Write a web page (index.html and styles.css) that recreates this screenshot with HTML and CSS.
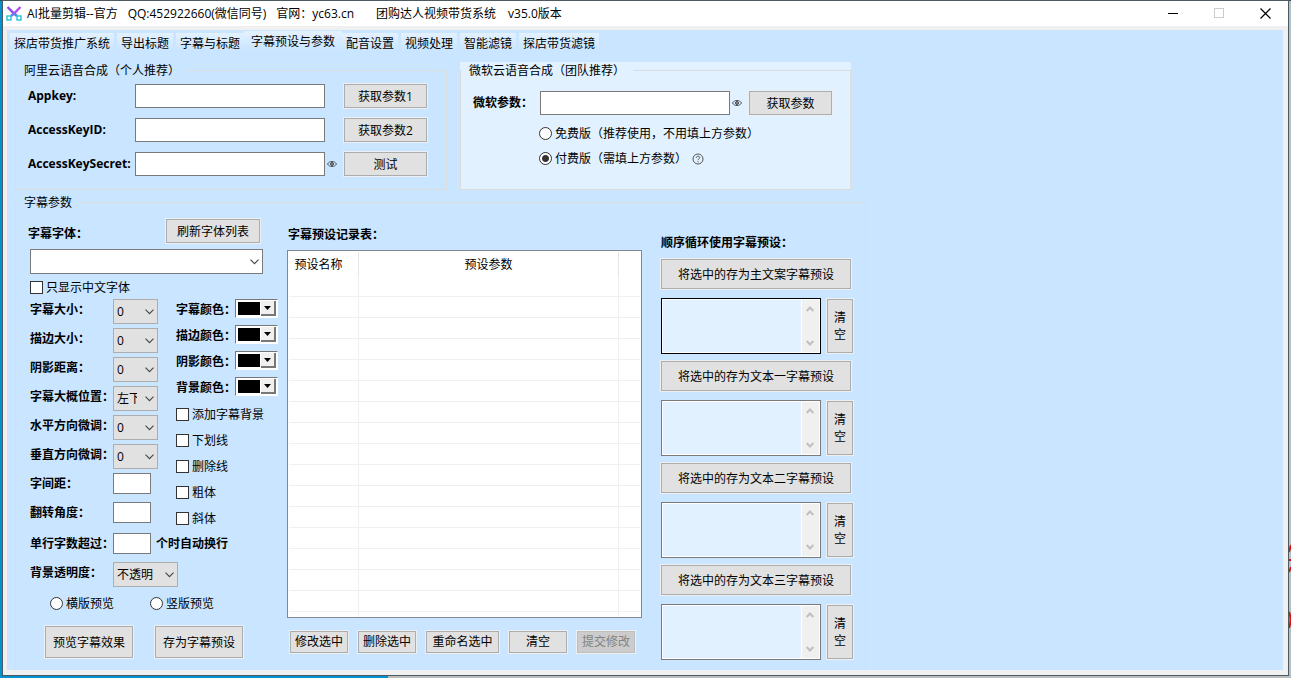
FILE: index.html
```html
<!DOCTYPE html>
<html lang="zh-CN">
<head>
<meta charset="utf-8">
<title>AI批量剪辑</title>
<link rel="stylesheet" href="styles.css">
</head>
<body>
<svg width="0" height="0" class="defs" aria-hidden="true">
  <symbol id="chev" viewBox="0 0 9 6"><path d="M.5 .7 4.5 4.7 8.5 .7" fill="none" stroke="#444" stroke-width="1.1"/></symbol>
  <symbol id="up" viewBox="0 0 8 6"><path d="M.7 5 4 1.5 7.3 5" fill="none" stroke="#bfbfbf" stroke-width="2"/></symbol>
  <symbol id="down" viewBox="0 0 8 6"><path d="M.7 1 4 4.5 7.3 1" fill="none" stroke="#bfbfbf" stroke-width="2"/></symbol>
  <symbol id="eye" viewBox="0 0 10 8"><path d="M.5 4C2.3 .6 7.7 .6 9.5 4 7.7 7.4 2.3 7.4 .5 4Z" fill="none" stroke="#555b62"/><circle cx="5" cy="4" r="1.5" fill="#8a9299" stroke="#444"/></symbol>
  <symbol id="tri" viewBox="0 0 7 4"><path d="M0 0H7L3.5 4Z"/></symbol>
</svg>

<main class="window">
  <header class="titlebar">
    <svg class="logo" viewBox="0 0 16 15" aria-hidden="true">
      <path d="M1.5 1 8 7.5 11 10" stroke="#8f4bea" stroke-width="2.4" fill="none"/>
      <path d="M14.5 1 8 7.5 5 10" stroke="#b04df0" stroke-width="2.4" fill="none"/>
      <path d="M5 10 8 7.5 11 10" stroke="#4a8fe0" stroke-width="1.6" fill="none"/>
      <rect x="1" y="10" width="4" height="4" stroke="#20c5dc" stroke-width="1.4" fill="none"/>
      <rect x="11" y="10" width="4" height="4" stroke="#20c5dc" stroke-width="1.4" fill="none"/>
    </svg>
    <h1 class="title"><span>AI批量剪辑--官方</span><span>QQ:452922660(微信同号)</span><span>官网：yc63.cn</span><span class="far">团购达人视频带货系统</span><span class="mid">v35.0版本</span></h1>
    <div class="winbtns">
      <button type="button" aria-label="最小化"><svg width="11" height="11"><path d="M0 5.5H10" stroke="#000"/></svg></button>
      <button type="button" aria-label="最大化" disabled><svg width="11" height="11"><rect x=".5" y=".5" width="9" height="9" fill="none" stroke="#ccc"/></svg></button>
      <button type="button" aria-label="关闭"><svg width="11" height="11"><path d="M.5 .5 10.5 10.5M10.5 .5 .5 10.5" stroke="#000" stroke-width="1.2"/></svg></button>
    </div>
  </header>

  <div class="client">
    <nav class="tabs">
      <button type="button" class="tab">探店带货推广系统</button>
      <button type="button" class="tab">导出标题</button>
      <button type="button" class="tab">字幕与标题</button>
      <button type="button" class="tab active">字幕预设与参数</button>
      <button type="button" class="tab">配音设置</button>
      <button type="button" class="tab">视频处理</button>
      <button type="button" class="tab">智能滤镜</button>
      <button type="button" class="tab">探店带货滤镜</button>
    </nav>

    <div class="groups">
      <fieldset class="group ali">
        <legend>阿里云语音合成（个人推荐）</legend>
        <div class="keys">
          <label class="b" for="k1">Appkey:</label><input class="box" id="k1" type="text"><span></span><button class="btn" type="button">获取参数1</button>
          <label class="b" for="k2">AccessKeyID:</label><input class="box" id="k2" type="text"><span></span><button class="btn" type="button">获取参数2</button>
          <label class="b" for="k3">AccessKeySecret:</label><input class="box" id="k3" type="text"><svg class="eye"><use href="#eye"/></svg><button class="btn" type="button">测试</button>
        </div>
      </fieldset>
      <div class="ms">
        <fieldset class="group">
          <legend>微软云语音合成（团队推荐）</legend>
          <div class="msrow">
            <label class="b" for="m1">微软参数：</label><input class="box" id="m1" type="text"><svg class="eye"><use href="#eye"/></svg><button class="btn" type="button">获取参数</button>
          </div>
          <div class="plans">
            <label class="opt"><input type="radio" name="plan">免费版（推荐使用，不用填上方参数）</label>
            <div class="paid">
              <label class="opt"><input type="radio" name="plan" checked>付费版（需填上方参数）</label>
              <svg width="12" height="12" viewBox="0 0 12 12" aria-hidden="true"><circle cx="6" cy="6" r="5" fill="none" stroke="#555"/><path d="M4.3 4.8C4.3 2.7 7.7 2.8 7.7 4.7 7.7 5.8 6 5.9 6 7.2M6 8.2V9.3" fill="none" stroke="#555"/></svg>
            </div>
          </div>
        </fieldset>
      </div>
    </div>

    <fieldset class="group params">
      <legend>字幕参数</legend>
      <div class="cols">
        <section class="style">
          <div class="fonthead"><label class="b" for="font">字幕字体：</label><button class="btn" type="button">刷新字体列表</button></div>
          <div class="sel white"><select id="font"><option></option></select><svg><use href="#chev"/></svg></div>
          <label class="opt only"><input type="checkbox">只显示中文字体</label>
          <div class="pair">
            <div class="left">
              <div class="row"><label class="b" for="s1">字幕大小：</label><div class="sel"><select id="s1"><option>0</option></select><svg><use href="#chev"/></svg></div></div>
              <div class="row"><label class="b" for="s2">描边大小：</label><div class="sel"><select id="s2"><option>0</option></select><svg><use href="#chev"/></svg></div></div>
              <div class="row"><label class="b" for="s3">阴影距离：</label><div class="sel"><select id="s3"><option>0</option></select><svg><use href="#chev"/></svg></div></div>
              <div class="row"><label class="b" for="s4">字幕大概位置：</label><div class="sel"><select id="s4"><option>左下</option></select><svg><use href="#chev"/></svg></div></div>
              <div class="row"><label class="b" for="s5">水平方向微调：</label><div class="sel"><select id="s5"><option>0</option></select><svg><use href="#chev"/></svg></div></div>
              <div class="row"><label class="b" for="s6">垂直方向微调：</label><div class="sel"><select id="s6"><option>0</option></select><svg><use href="#chev"/></svg></div></div>
              <div class="row"><label class="b" for="s7">字间距：</label><input class="box num" id="s7" type="text"></div>
              <div class="row"><label class="b" for="s8">翻转角度：</label><input class="box num" id="s8" type="text"></div>
            </div>
            <div class="right">
              <div class="crow"><span class="b">字幕颜色：</span><button type="button" class="color" aria-label="字幕颜色"><i></i><em><svg><use href="#tri"/></svg></em></button></div>
              <div class="crow"><span class="b">描边颜色：</span><button type="button" class="color" aria-label="描边颜色"><i></i><em><svg><use href="#tri"/></svg></em></button></div>
              <div class="crow"><span class="b">阴影颜色：</span><button type="button" class="color" aria-label="阴影颜色"><i></i><em><svg><use href="#tri"/></svg></em></button></div>
              <div class="crow"><span class="b">背景颜色：</span><button type="button" class="color" aria-label="背景颜色"><i></i><em><svg><use href="#tri"/></svg></em></button></div>
              <div class="checks">
                <label class="opt"><input type="checkbox">添加字幕背景</label>
                <label class="opt"><input type="checkbox">下划线</label>
                <label class="opt"><input type="checkbox">删除线</label>
                <label class="opt"><input type="checkbox">粗体</label>
                <label class="opt"><input type="checkbox">斜体</label>
              </div>
            </div>
          </div>
          <div class="row wrapat"><label class="b" for="s9">单行字数超过：</label><input class="box num" id="s9" type="text"><span class="b after">个时自动换行</span></div>
          <div class="row"><label class="b" for="s10">背景透明度：</label><div class="sel wide"><select id="s10"><option>不透明</option></select><svg><use href="#chev"/></svg></div></div>
          <div class="orient">
            <label class="opt"><input type="radio" name="orient">横版预览</label>
            <label class="opt"><input type="radio" name="orient">竖版预览</label>
          </div>
          <div class="big"><button class="btn" type="button">预览字幕效果</button><button class="btn" type="button">存为字幕预设</button></div>
        </section>

        <section class="records">
          <h2 class="b">字幕预设记录表：</h2>
          <div class="list">
            <table>
              <thead><tr><th class="c1">预设名称</th><th>预设参数</th><th class="c3"></th></tr></thead>
              <tbody>
                <tr><td></td><td></td><td></td></tr><tr><td></td><td></td><td></td></tr>
                <tr><td></td><td></td><td></td></tr><tr><td></td><td></td><td></td></tr>
                <tr><td></td><td></td><td></td></tr><tr><td></td><td></td><td></td></tr>
                <tr><td></td><td></td><td></td></tr><tr><td></td><td></td><td></td></tr>
                <tr><td></td><td></td><td></td></tr><tr><td></td><td></td><td></td></tr>
                <tr><td></td><td></td><td></td></tr><tr><td></td><td></td><td></td></tr>
                <tr><td></td><td></td><td></td></tr><tr><td></td><td></td><td></td></tr>
                <tr><td></td><td></td><td></td></tr><tr><td></td><td></td><td></td></tr>
                <tr><td></td><td></td><td></td></tr>
              </tbody>
            </table>
          </div>
          <div class="acts">
            <button class="btn" type="button">修改选中</button>
            <button class="btn" type="button">删除选中</button>
            <button class="btn long" type="button">重命名选中</button>
            <button class="btn" type="button">清空</button>
            <button class="btn" type="button" disabled>提交修改</button>
          </div>
        </section>

        <section class="cycle">
          <h2 class="b">顺序循环使用字幕预设：</h2>
          <div class="slot">
            <button class="btn save" type="button">将选中的存为主文案字幕预设</button>
            <div class="line"><div class="area hot"><textarea aria-label="主文案字幕预设"></textarea><div class="bar"><svg><use href="#up"/></svg><svg><use href="#down"/></svg></div></div><button class="btn clear" type="button">清<br>空</button></div>
          </div>
          <div class="slot">
            <button class="btn save" type="button">将选中的存为文本一字幕预设</button>
            <div class="line"><div class="area"><textarea aria-label="文本一字幕预设"></textarea><div class="bar"><svg><use href="#up"/></svg><svg><use href="#down"/></svg></div></div><button class="btn clear" type="button">清<br>空</button></div>
          </div>
          <div class="slot">
            <button class="btn save" type="button">将选中的存为文本二字幕预设</button>
            <div class="line"><div class="area"><textarea aria-label="文本二字幕预设"></textarea><div class="bar"><svg><use href="#up"/></svg><svg><use href="#down"/></svg></div></div><button class="btn clear" type="button">清<br>空</button></div>
          </div>
          <div class="slot">
            <button class="btn save" type="button">将选中的存为文本三字幕预设</button>
            <div class="line"><div class="area"><textarea aria-label="文本三字幕预设"></textarea><div class="bar"><svg><use href="#up"/></svg><svg><use href="#down"/></svg></div></div><button class="btn clear" type="button">清<br>空</button></div>
          </div>
        </section>
      </div>
    </fieldset>
  </div>
</main>
<svg class="peek" width="2" height="140" aria-hidden="true"><path d="M0 12 2 5M0 20H2M0 32 2 27" stroke="#e01010" stroke-width="2"/><path d="M0 72Q3 79 0 88" stroke="#e01010" stroke-width="2" fill="none"/></svg>
</body>
</html>
```
FILE: styles.css
```css
* { box-sizing: border-box; }

body {
  margin: 0;
  height: 100vh;
  padding: 1px 3px 3px;
  display: flex;
  overflow: hidden;
  position: relative;
  font: 12px/17px "Open Sans", "Noto Sans CJK SC", sans-serif;
  color: #000;
  background:
    linear-gradient(#3c4650, #3c4650) top / 100% 1px no-repeat,
    linear-gradient(#b4c0c6, #b4c0c6) right / 3px 100% no-repeat,
    linear-gradient(90deg, #0590cf 388px, #bcbcbc 388px);
}

.defs { position: absolute; }
.peek { position: absolute; right: 0; top: 540px; }

button, input, select, textarea { font: inherit; color: inherit; margin: 0; }
h1, h2 { margin: 0; font-size: 12px; font-weight: 400; }
.b { font-weight: 700; white-space: nowrap; }

.window {
  flex: 1;
  display: flex;
  flex-direction: column;
  background: #f0f0f0;
  padding: 0 5px 5px 4px;
  box-shadow: 0 0 0 1px #4c5a62;
}

.titlebar {
  display: flex;
  align-items: center;
  height: 25px;
  margin: 0 -5px 4px -4px;
  padding-left: 3px;
  background: #fff;
}
.logo { width: 16px; height: 15px; margin-right: 5px; }
.title { display: flex; gap: 10px; flex: 1; white-space: nowrap; }
.title .far { margin-left: 12px; }
.title .mid { margin-left: 2px; }
.winbtns { display: flex; }
.winbtns button {
  width: 46px;
  height: 25px;
  padding: 0;
  border: 0;
  background: none;
  display: grid;
  place-items: center;
}

.client { flex: 1; min-height: 0; background: #c9e5ff; overflow: hidden; padding-left: 3px; }

.tabs { display: flex; gap: 3px; align-items: flex-start; height: 32px; padding-top: 3px; }
.tab {
  border: 0;
  padding: 2px 4px 0;
  height: 18px;
  line-height: 17px;
  white-space: nowrap;
  background: linear-gradient(#e4f1ff, #c9e5ff);
}
.tab.active { padding: 2px 7px 0; margin: -2px -3px 0; height: 20px; line-height: 18px; }

.groups { display: flex; align-items: stretch; gap: 13px; padding-left: 5px; }
.group { margin: 0; min-width: 0; border: 1px solid #dcdcdc; padding: 0; }
legend { padding: 0 8px; margin: 0; line-height: 17px; white-space: nowrap; }

.box { border: 1px solid #7a7a7a; background: #fff; height: 24px; width: 190px; padding: 0 4px; }
.btn {
  height: 24px;
  padding: 0 4px;
  border: 1px solid #adadad;
  border-radius: 0;
  background: #e1e1e1;
  box-shadow: 0 0 0 1px #edf0f2;
  line-height: 17px;
  white-space: nowrap;
}
.btn:disabled { background: #ccc; color: #838383; border-color: #bfbfbf; }
.eye { width: 10px; height: 8px; }

.ali { width: 432px; padding-bottom: 12px; }
.keys { display: grid; grid-template-columns: 107px 190px 19px 83px; row-gap: 8px; align-items: center; padding: 4px 0 0 12px; }
.keys .b { padding-bottom: 2px; }
.keys .eye { margin-left: 2px; }
.keys > * { margin-top: 1px; margin-bottom: 1px; }

.ms { width: 391px; background: #e1f1ff; }
.ms .group { height: 100%; }
.msrow { display: grid; grid-template-columns: 67px 190px 19px 83px; align-items: center; padding: 12px 0 0 12px; }
.msrow .b { padding-bottom: 2px; }
.msrow .eye { margin-left: 2px; }
.plans { display: flex; flex-direction: column; gap: 8px; padding: 10px 0 0 78px; }
.paid { display: flex; align-items: center; gap: 5px; }

.opt { display: flex; align-items: center; gap: 3px; white-space: nowrap; }
.opt input {
  appearance: none;
  flex: none;
  width: 13px;
  height: 13px;
  border: 1px solid #333;
  background: #fff;
}
.opt input[type="radio"] { border-radius: 50%; }
.opt input[type="radio"]:checked { background: radial-gradient(circle, #333 3px, #fff 4px); }

.params { width: 851px; margin: 4px 0 0 5px; border-bottom: 0; height: 100%; }
.cols { display: grid; grid-template-columns: 259px 374px 1fr; padding-left: 12px; }

.fonthead { display: flex; justify-content: space-between; width: 232px; padding-top: 8px; }
.fonthead .b { padding-top: 6px; }
.fonthead .btn { width: 94px; }

.sel { position: relative; width: 45px; height: 25px; flex: none; }
.sel select {
  appearance: none;
  width: 100%;
  height: 100%;
  padding: 0 20px 0 3px;
  border: 1px solid #adadad;
  border-radius: 0;
  background: #e1e1e1;
}
.sel svg { position: absolute; right: 4px; top: 10px; width: 9px; height: 6px; pointer-events: none; }
.sel.white { width: 233px; margin: 6px 0 0 2px; }
.sel.white select { background: #fff; border-color: #7a7a7a; }
.sel.wide { width: 65px; }
.only { margin: 5px 0 0 2px; }

.pair { display: flex; margin-top: 3px; }
.left { width: 148px; }
.row { display: flex; height: 29px; padding-left: 2px; }
.row > label { width: 83px; flex: none; padding-top: 2px; }
.num { width: 38px; height: 21px; }
.wrapat { margin-top: 2px; }
.after { padding: 2px 0 0 5px; }

.crow { display: flex; height: 26px; }
.crow > span { width: 59px; flex: none; padding-top: 2px; }
.color {
  display: flex;
  align-items: stretch;
  width: 43px;
  height: 19px;
  padding: 1px;
  border: 1px solid #777;
  border-right-color: #fff;
  border-bottom-color: #fff;
  border-radius: 0;
  background: #fff;
}
.color i { width: 22px; margin: 1px; background: #000; }
.color em { flex: 1; display: grid; place-items: center; background: #f0f0f0; border-right: 2px solid #777; border-bottom: 2px solid #777; }
.color svg { width: 7px; height: 4px; }
.checks { display: flex; flex-direction: column; gap: 9px; padding-top: 3px; }

.orient { display: flex; gap: 36px; padding: 4px 0 0 22px; }
.big { display: flex; gap: 22px; padding: 14px 0 0 17px; }
.big .btn { width: 88px; height: 32px; }

.records > h2 { padding: 15px 0 0 1px; }
.list { width: 355px; height: 368px; margin-top: 7px; padding: 1px; border: 1px solid #828790; background: #fff; overflow: hidden; }
table { width: 100%; border-collapse: separate; border-spacing: 0; table-layout: fixed; }
th { height: 24px; padding: 0; font-weight: 400; border-right: 1px solid #e5e5e5; }
td { height: 21px; padding: 0; border-right: 1px solid #f0f0f0; border-bottom: 1px solid #f0f0f0; }
th:last-child, td:last-child { border-right: 0; }
.c1 { width: 70px; padding-right: 10px; }
.c3 { width: 21px; }
.acts { display: flex; gap: 10px; padding: 13px 0 0 3px; }
.acts .btn { width: 58px; height: 22px; line-height: 16px; }
.acts .long { width: 73px; }

.cycle > h2 { padding: 23px 0 7px; }
.slot { width: 192px; padding-bottom: 6px; }
.save { width: 190px; height: 30px; margin-top: 1px; display: block; }
.line { display: flex; gap: 6px; margin-top: 9px; }
.area { display: flex; width: 160px; height: 56px; padding: 1px; border: 1px solid #7a7a7a; background: #fff; }
.area.hot { border-color: #000; }
.area textarea { flex: 1; min-width: 0; border: 0; padding: 2px; resize: none; overflow: hidden; background: #e1f1ff; }
.bar { width: 17px; margin-left: 1px; padding: 6px 4px; display: flex; flex-direction: column; justify-content: space-between; background: #f0f0f0; }
.bar svg { width: 8px; height: 6px; }
.clear { width: 26px; height: 54px; margin-top: 1px; }
```
